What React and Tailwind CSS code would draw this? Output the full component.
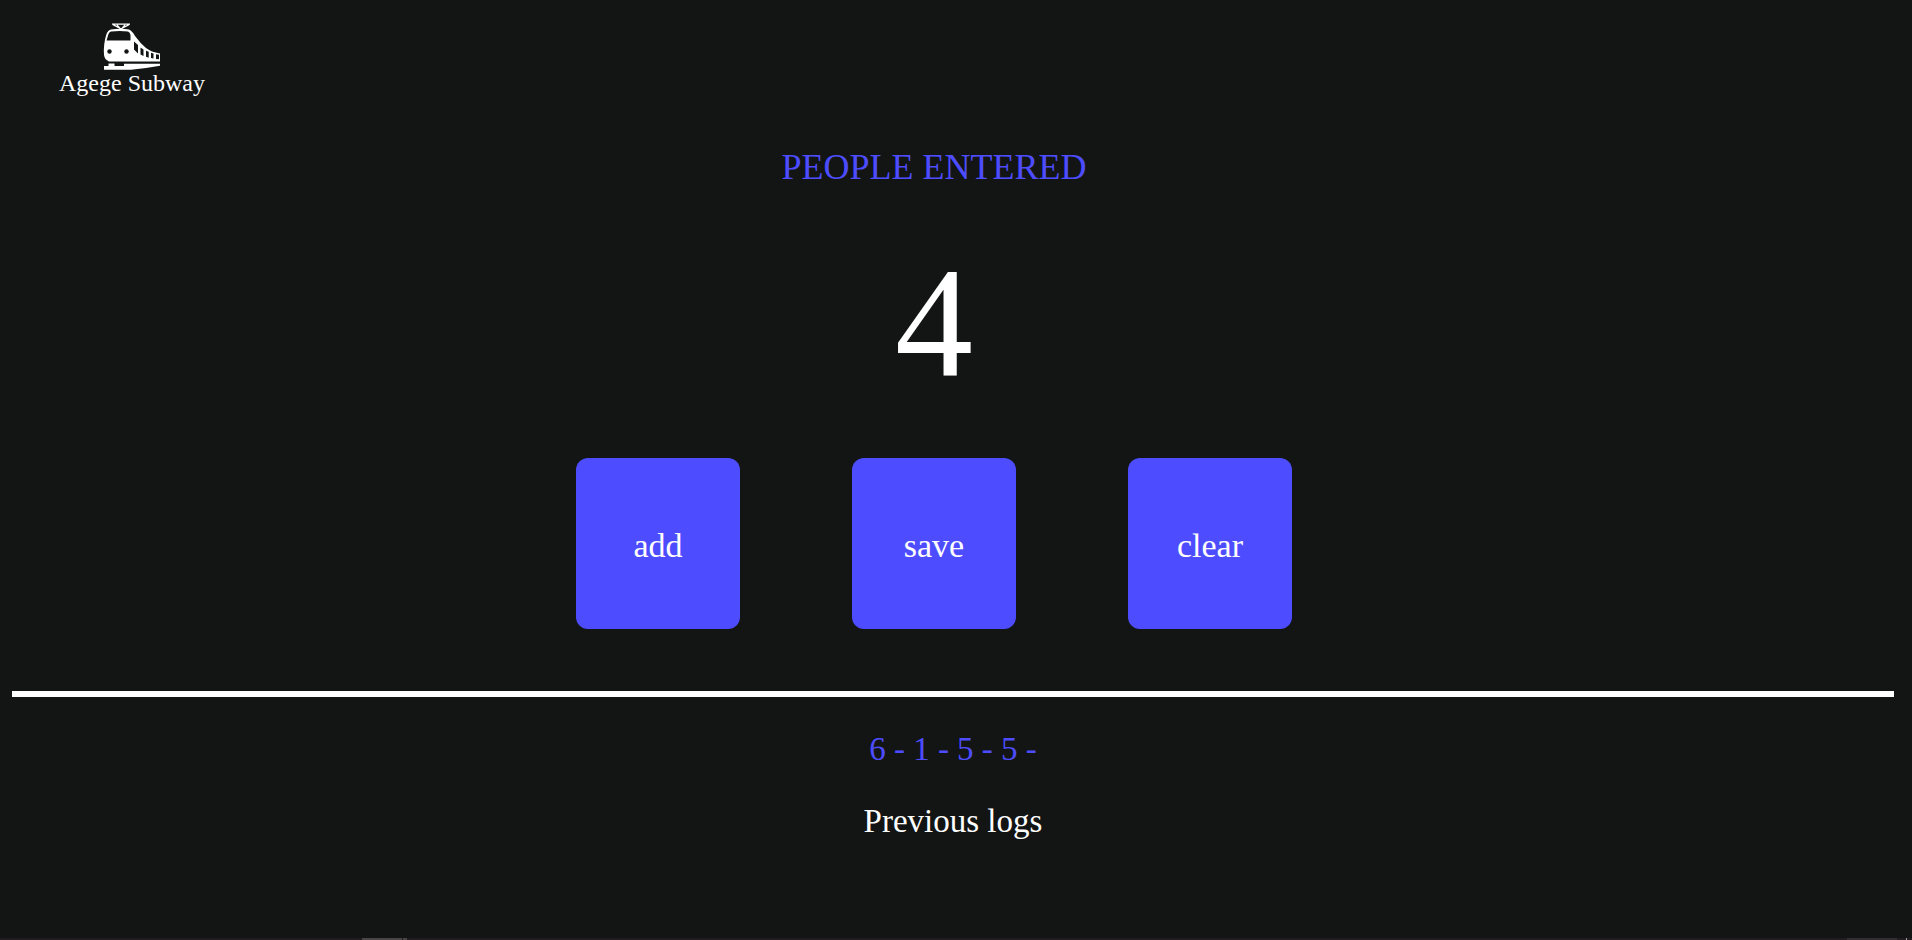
import { useState } from "react";

function TrainIcon() {
  return (
    <svg viewBox="0 0 58 48" className="block h-12 w-[58px]" aria-hidden="true">
      <g fill="none" stroke="#fff" strokeWidth="1.2">
        <path d="M9 1.2H27M10 1.6L18 5.8L26 1.6M14 2L18 6.5L22 2" />
      </g>
      <path
        fill="#fff"
        fillRule="evenodd"
        d="M8 6.5Q18 4.8 26 6.5Q29.500 8 32 13Q37 20 43 25Q48 29 57 30.500V38.500H6Q1.500 36.500 1 32Q.2 21 3.500 11Q5 7.200 8 6.500ZM8 8.500Q6.500 8.800 5.500 11L3.500 17.500H27.500V12Q27 9 25 8.500Q17 7.500 8 8.500ZM31 18.500V26.500L35 30.500V22ZM37.500 24.500V31.500L40.500 33V26.500ZM43 27.700V33.700L45.700 34.700V28.800ZM48 29.700V35L50.500 35.500V30.500ZM53 31.300V36L56 36.200V31.800Z"
      />
      <circle cx="6.500" cy="28.500" r="2.200" fill="#131514" />
      <circle cx="23.500" cy="28.500" r="2.200" fill="#131514" />
      <path fill="#fff" d="M5.500 40.500H11.500V43H21V40.800H57V42.700Q42 45.500 28 46.700H1V43H5.500Z" />
    </svg>
  );
}

function ActionButton({ children, onClick }) {
  return (
    <button
      type="button"
      onClick={onClick}
      className="h-[171px] w-[164px] cursor-pointer rounded-xl bg-[#4d4dff] pt-1 text-[34px] leading-10 text-white"
    >
      {children}
    </button>
  );
}

export default function App() {
  const [count, setCount] = useState(4);
  const [entries, setEntries] = useState([6, 1, 5, 5]);

  const save = () => {
    setEntries([...entries, count]);
    setCount(0);
  };

  return (
    <div className="flex min-h-screen flex-col bg-[#131514] font-['Liberation_Serif',serif] text-white">
      <header className="flex px-[59px] pt-[23px]">
        <a href="#" className="flex flex-col items-center text-2xl leading-6">
          <TrainIcon />
          <span>Agege Subway</span>
        </a>
      </header>
      <main className="flex grow flex-col pr-[18px] pl-3">
        <section className="flex flex-col items-center pt-12 pr-[38px]">
          <h1 className="text-4xl leading-12 text-[#4d4dff]">PEOPLE ENTERED</h1>
          <output className="mt-[53px] text-[156px] leading-[160px]">{count}</output>
          <div className="mt-[54px] flex flex-wrap justify-center gap-28">
            <ActionButton onClick={() => setCount(count + 1)}>add</ActionButton>
            <ActionButton onClick={save}>save</ActionButton>
            <ActionButton onClick={() => setCount(0)}>clear</ActionButton>
          </div>
        </section>
        <hr className="mt-[62px] border-t-6 border-white" />
        <section className="flex flex-col items-center gap-8 pt-8 text-[33px] leading-10">
          <p className="whitespace-pre text-[#4d4dff]">
            {entries.map((entry) => `${entry} - `).join("").trimEnd()}
          </p>
          <h2>Previous logs</h2>
        </section>
      </main>
      <footer className="flex h-0.5 bg-[#211c1f]">
        <div className="ml-[362px] w-10 bg-[#4a4648]" />
        <div className="ml-px w-1 bg-[#4a4648]" />
        <div className="mr-[9px] ml-auto w-[50px] bg-[#332e31]" />
        <div className="mr-[5px] w-px bg-[#9a9a9a]" />
      </footer>
    </div>
  );
}
